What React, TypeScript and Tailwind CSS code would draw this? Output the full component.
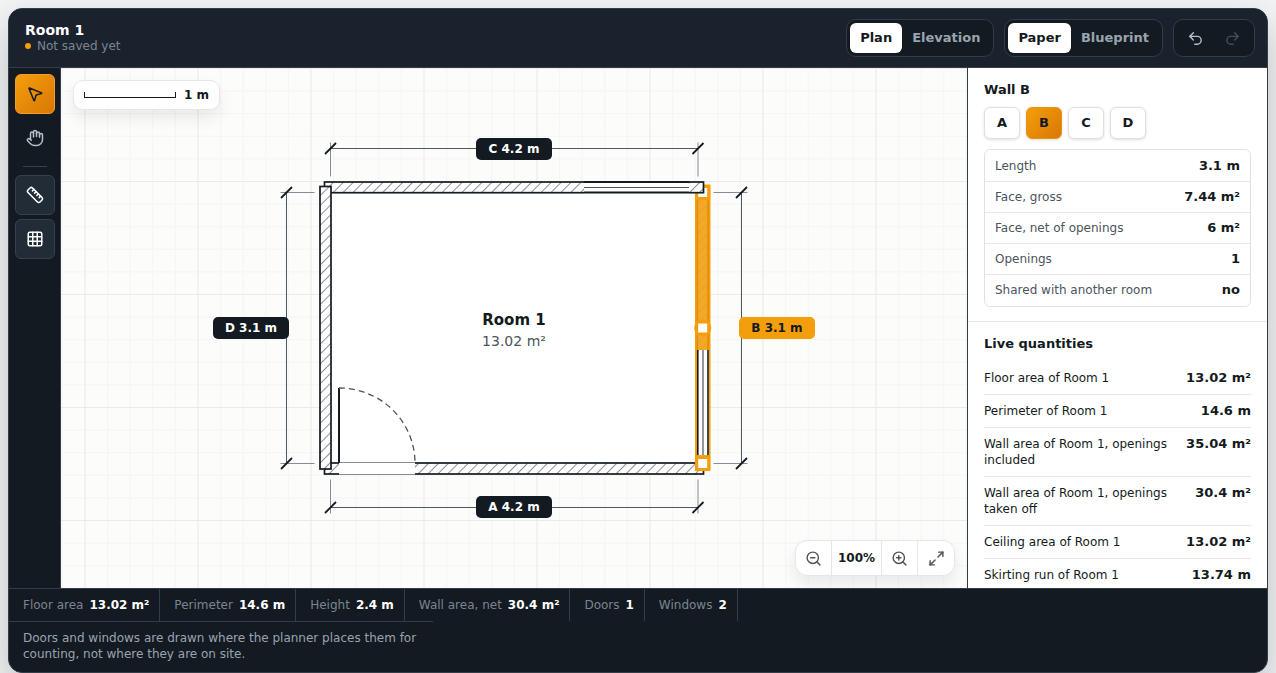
import { useState } from 'react'
import type { ReactNode } from 'react'
import { Grid3x3, Hand, Maximize2, MousePointer2, Redo2, Ruler, Undo2, ZoomIn, ZoomOut } from 'lucide-react'

const WALL_FACTS = [
  ['Length', '3.1 m'],
  ['Face, gross', '7.44 m²'],
  ['Face, net of openings', '6 m²'],
  ['Openings', '1'],
  ['Shared with another room', 'no'],
]

const QUANTITIES = [
  ['Floor area of Room 1', '13.02 m²'],
  ['Perimeter of Room 1', '14.6 m'],
  ['Wall area of Room 1, openings included', '35.04 m²'],
  ['Wall area of Room 1, openings taken off', '30.4 m²'],
  ['Ceiling area of Room 1', '13.02 m²'],
  ['Skirting run of Room 1', '13.74 m'],
]

const STATUS = [
  ['Floor area', '13.02 m²'],
  ['Perimeter', '14.6 m'],
  ['Height', '2.4 m'],
  ['Wall area, net', '30.4 m²'],
  ['Doors', '1'],
  ['Windows', '2'],
]

function Segmented({ options, value, onChange }: { options: string[]; value: string; onChange: (v: string) => void }) {
  return (
    <div className="flex rounded-[10px] border border-[#333d48] bg-[#131a21] p-[3px]">
      {options.map(o => (
        <button
          key={o}
          onClick={() => onChange(o)}
          aria-pressed={o === value}
          className={`h-[30px] rounded-md px-2.5 text-[13px] font-bold ${
            o === value ? 'bg-white text-[#131a21]' : 'text-[#9aa4af]'
          }`}
        >
          {o}
        </button>
      ))}
    </div>
  )
}

function Tool({ label, look, children }: { label: string; look: 'active' | 'plain' | 'on'; children: ReactNode }) {
  const tone = {
    active: 'border-[#f0a02a] bg-linear-135 from-[#f59e0b] to-[#d97706] text-[#131a21]',
    plain:  'border-transparent text-[#b6bec7]',
    on:     'border-[#36414c] bg-[#222c37] text-white',
  }[look]
  return (
    <button aria-label={label} className={`flex size-10 items-center justify-center rounded-md border ${tone}`}>
      {children}
    </button>
  )
}

/** Architectural dimension: line, witness lines and slashed ends */
function Dimension({ x1, y1, x2, y2, away }: { x1: number; y1: number; x2: number; y2: number; away: number }) {
  const flat = y1 === y2
  const ends = [[x1, y1], [x2, y2]]
  return (
    <g stroke="#131a21" fill="none">
      <path d={`M${x1} ${y1}L${x2} ${y2}`} stroke="#4f5763" />
      {ends.map(([x, y]) => (
        <g key={`${x}-${y}`}>
          <path
            d={flat
              ? `M${x} ${y - Math.sign(away) * 6}V${y + away}`
              : `M${x - Math.sign(away) * 6} ${y}H${x + away}`}
            stroke="#868c94"
          />
          <path d={`M${x - 5.5} ${y + 5.5}l11 -11`} strokeWidth="1.8" />
        </g>
      ))}
    </g>
  )
}

function DimLabel({ x, y, text, selected }: { x: number; y: number; text: string; selected?: boolean }) {
  return (
    <g>
      <rect x={x - 38} y={y - 11} width="76" height="22" rx="5" fill={selected ? '#f59e0b' : '#131a21'} />
      <text x={x} y={y + 4} textAnchor="middle" fontSize="12" fontWeight="700" fill={selected ? '#131a21' : '#fff'}>
        {text}
      </text>
    </g>
  )
}

function Wall({ x, y, w, h }: { x: number; y: number; w: number; h: number }) {
  return (
    <g>
      <rect x={x} y={y} width={w} height={h} fill="#fff" />
      <rect x={x} y={y} width={w} height={h} fill="url(#hatch)" stroke="#131a21" strokeWidth="1.7" />
    </g>
  )
}

function FloorPlan() {
  return (
    <svg
      viewBox="0 0 906 520"
      preserveAspectRatio="xMidYMid slice"
      className="absolute inset-0 size-full"
      role="img"
      aria-label="Floor plan of Room 1"
    >
      <defs>
        <pattern id="minor" x="23.5" y="0" width="22.6" height="22.6" patternUnits="userSpaceOnUse">
          <path d="M0.5 0V22.6M0 0.5H22.6" stroke="#f4f5f4" />
        </pattern>
        <pattern id="major" x="23.5" y="0" width="113" height="113" patternUnits="userSpaceOnUse">
          <path d="M0.5 0V113M0 0.5H113" stroke="#e9ebeb" />
        </pattern>
        <pattern id="hatch" width="7" height="7" patternUnits="userSpaceOnUse" patternTransform="rotate(45)">
          <path d="M0.5 0V7" stroke="#8a9098" />
        </pattern>
      </defs>
      <rect width="906" height="520" fill="#fcfcfa" />
      <rect width="906" height="520" fill="url(#minor)" />
      <rect width="906" height="520" fill="url(#major)" />

      {/* Room floor */}
      <rect x="269" y="124" width="368" height="272" fill="#fff" />

      {/* Wall A with the door */}
      <Wall x={263.5} y={395} w={379} h={11} />
      <rect x="278" y="393" width="76" height="14" fill="#fff" />
      <path d="M278 394.5h76M278 406.5h76" stroke="#868c94" />
      <path d="M278 395V320" stroke="#131a21" strokeWidth="2" />
      <path d="M278 320A76 75 0 0 1 354 395" fill="none" stroke="#4b535d" strokeWidth="1.3" strokeDasharray="6 4" />

      {/* Wall B, selected */}
      <rect x="635.5" y="118" width="12.5" height="283" fill="#f7a823" stroke="#f59e0b" strokeWidth="3" />
      <rect x="637" y="119" width="10" height="280" fill="url(#hatch)" opacity="0.25" />
      <path d="M636.5 130V400M647 130V400" stroke="#dd8f10" strokeWidth="1.5" />
      <rect x="636" y="282" width="12" height="105" fill="#fff" />
      <path d="M636.8 282v105M647 282v105" stroke="#131a21" strokeWidth="1.6" />
      <path d="M642 282v105" stroke="#4b535d" strokeWidth="1.2" />
      <circle cx="641.7" cy="260" r="8.5" fill="#f59e0b" />
      <rect x="637.2" y="255.5" width="9" height="9" fill="#fff" />
      <rect x="635.7" y="118.5" width="12" height="12" fill="#fff" stroke="#f59e0b" strokeWidth="3" />
      <rect x="635.7" y="389.5" width="12" height="12" fill="#fff" stroke="#f59e0b" strokeWidth="3" />

      {/* Wall C with the window */}
      <Wall x={263.5} y={114} w={379} h={10.7} />
      <rect x="523" y="113" width="105" height="13" fill="#fff" />
      <path d="M523 114h105M523 124.5h105" stroke="#131a21" strokeWidth="2" />
      <path d="M523 119.5h105" stroke="#4b535d" strokeWidth="1.2" />

      {/* Wall D */}
      <Wall x={259} y={118.5} w={11} h={282.5} />

      <Dimension x1={269.5} y1={80.5} x2={637} y2={80.5} away={28} />
      <Dimension x1={269.5} y1={439.5} x2={637} y2={439.5} away={-28} />
      <Dimension x1={225.5} y1={124.5} x2={225.5} y2={395.5} away={28} />
      <Dimension x1={680.5} y1={124.5} x2={680.5} y2={395.5} away={-28} />

      <DimLabel x={453} y={81} text="C 4.2 m" />
      <DimLabel x={453} y={439} text="A 4.2 m" />
      <DimLabel x={190} y={260} text="D 3.1 m" />
      <DimLabel x={716} y={260} text="B 3.1 m" selected />

      <text x="453" y="257" textAnchor="middle" fontSize="15" fontWeight="700" fill="#131a21">Room 1</text>
      <text x="453" y="278" textAnchor="middle" fontSize="14" fill="#4b535d">13.02 m²</text>
    </svg>
  )
}

export default function App() {
  const [view,  setView]  = useState('Plan')
  const [theme, setTheme] = useState('Paper')
  const [wall,  setWall]  = useState('B')

  return (
    <div className="flex h-screen flex-col bg-[#f3f4f6] px-2 pt-2 font-['DejaVu_Sans',sans-serif] text-[#131a21]">
      <div className="flex min-h-0 flex-1 flex-col overflow-hidden rounded-[14px] border border-[#333d48] bg-[#131a21] shadow-[0_18px_40px_rgba(19,26,33,0.25)]">
        <header className="flex items-center justify-between border-b border-[#333d48] bg-[#1a222d] py-2.5 pr-3 pl-4">
          <div className="pb-0.5">
            <h1 className="text-sm leading-[18px] font-bold text-white">Room 1</h1>
            <p className="flex items-center gap-1.5 text-xs leading-[14px] text-[#7b8591]">
              <span className="size-1.5 rounded-full bg-[#f59e0b]" />
              Not saved yet
            </p>
          </div>
          <div className="flex gap-2.5">
            <Segmented options={['Plan', 'Elevation']} value={view} onChange={setView} />
            <Segmented options={['Paper', 'Blueprint']} value={theme} onChange={setTheme} />
            <div className="flex rounded-[10px] border border-[#333d48] bg-[#131a21] p-[3px]">
              <button aria-label="Undo" className="flex w-[37px] items-center justify-center text-[#b6bec7]">
                <Undo2 size={17} />
              </button>
              <button aria-label="Redo" disabled className="flex w-[37px] items-center justify-center text-[#454e58]">
                <Redo2 size={17} />
              </button>
            </div>
          </div>
        </header>

        <div className="flex min-h-0 flex-1">
          <nav className="flex w-[52px] shrink-0 flex-col items-center gap-1 border-r border-[#333d48] py-1.5">
            <Tool label="Select" look="active"><MousePointer2 size={18} /></Tool>
            <Tool label="Pan" look="plain"><Hand size={18} /></Tool>
            <hr className="my-1 w-6 border-[#36414c]" />
            <Tool label="Dimensions" look="on"><Ruler size={18} /></Tool>
            <Tool label="Grid" look="on"><Grid3x3 size={18} /></Tool>
          </nav>

          <main className="relative min-w-0 flex-1 overflow-hidden">
            <FloorPlan />
            <div className="absolute top-3 left-3 flex h-[30px] items-center gap-2 rounded-[10px] border border-[#e5e7ea] bg-white px-2.5 shadow-[0_8px_16px_rgba(19,26,33,0.08)]">
              <span className="h-[6px] w-[92px] border border-t-0 border-[#131a21]" />
              <span className="text-xs font-bold">1 m</span>
            </div>
            <div className="absolute right-3 bottom-3 flex h-9 divide-x divide-[#e5e7ea] rounded-xl border border-[#e5e7ea] bg-white text-[#4b535d] shadow-[0_8px_16px_rgba(19,26,33,0.08)]">
              <button aria-label="Zoom out" className="flex w-9 items-center justify-center"><ZoomOut size={17} /></button>
              <button className="w-[50px] text-xs font-bold text-[#131a21]">100%</button>
              <button aria-label="Zoom in" className="flex w-9 items-center justify-center"><ZoomIn size={17} /></button>
              <button aria-label="Fit" className="flex w-9 items-center justify-center"><Maximize2 size={17} /></button>
            </div>
          </main>

          <aside className="w-[300px] shrink-0 overflow-y-auto border-l border-[#333d48] bg-white [scrollbar-width:none]">
            <section className="border-b border-[#e5e7ea] px-4 pt-[13px] pb-3.5">
              <h2 className="mb-[9px] text-[13px] leading-[17px] font-bold">Wall B</h2>
              <div className="flex gap-1.5">
                {['A', 'B', 'C', 'D'].map(w => (
                  <button
                    key={w}
                    onClick={() => setWall(w)}
                    aria-pressed={w === wall}
                    className={`h-8 w-9 rounded-md border text-[13px] font-bold shadow-[0_1px_3px_rgba(19,26,33,0.14)] ${
                      w === wall
                        ? 'border-[#e8920f] bg-linear-135 from-[#f59e0b] to-[#d97706]'
                        : 'border-[#dcdfe3] bg-white'
                    }`}
                  >
                    {w}
                  </button>
                ))}
              </div>
              <dl className="mt-2.5 divide-y divide-[#e5e7ea] rounded-md border border-[#dfe2e5] py-px leading-4">
                {WALL_FACTS.map(([label, value]) => (
                  <div key={label} className="flex justify-between px-2.5 py-[7px]">
                    <dt className="text-xs leading-4 text-[#4b535d]">{label}</dt>
                    <dd className="text-[13px] leading-4 font-bold">{value}</dd>
                  </div>
                ))}
              </dl>
            </section>

            <section className="px-4 py-[13px]">
              <h2 className="mb-2.5 text-[13px] leading-[17px] font-bold">Live quantities</h2>
              <dl className="divide-y divide-[#e5e7ea]">
                {QUANTITIES.map(([label, value]) => (
                  <div key={label} className="flex justify-between gap-3 py-2">
                    <dt className="text-xs leading-4">{label}</dt>
                    <dd className="text-[13px] leading-4 font-bold whitespace-nowrap">{value}</dd>
                  </div>
                ))}
              </dl>
            </section>
          </aside>
        </div>

        <footer className="border-t border-[#333d48] text-xs">
          <dl className="flex">
            {STATUS.map(([label, value]) => (
              <div key={label} className="flex h-8 items-center gap-1.5 border-r border-[#333d48] pr-2.5 pl-3.5">
                <dt className="text-[#7b8591]">{label}</dt>
                <dd className="font-bold text-white">{value}</dd>
              </div>
            ))}
          </dl>
          <p className="max-w-[424px] border-t border-[#333d48] px-3.5 pt-2 pb-2.5 leading-4 text-[#9aa4af]">
            Doors and windows are drawn where the planner places them for counting, not where they are on site.
          </p>
        </footer>
      </div>
    </div>
  )
}
